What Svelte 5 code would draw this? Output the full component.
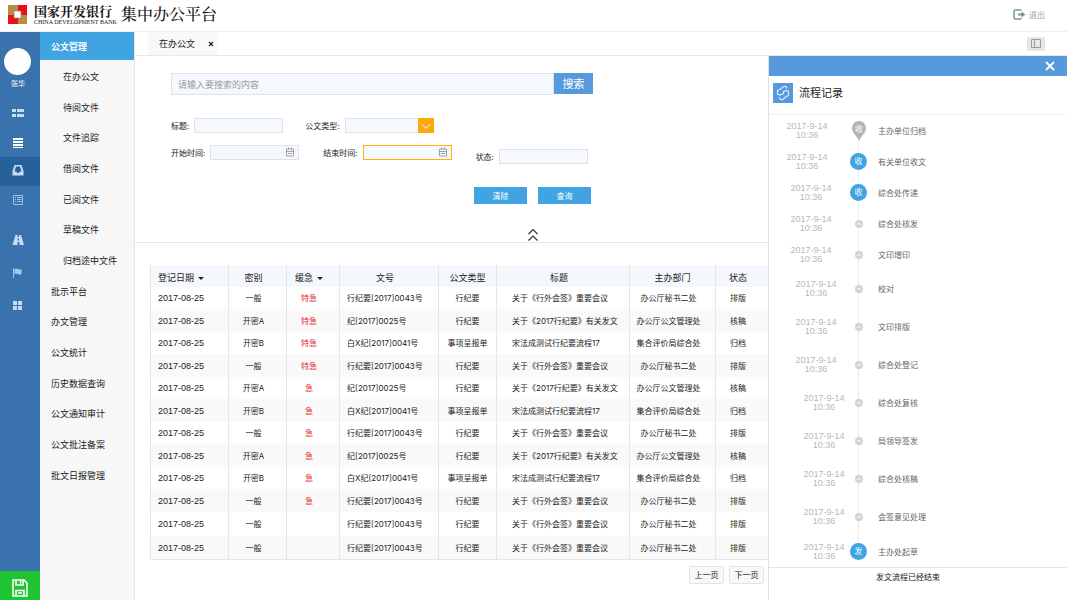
<script>
  let activeRail = 'inbox';
  let activeMenu = '在办公文';
  let flowOpen = true;
  let filterOpen = true;

  let keyword = '';
  let filter = { title: '', type: '', start: '', end: '', status: '' };

  const menu = [
    { name: '在办公文', sub: true },
    { name: '待阅文件', sub: true },
    { name: '文件追踪', sub: true },
    { name: '借阅文件', sub: true },
    { name: '已阅文件', sub: true },
    { name: '草稿文件', sub: true },
    { name: '归档途中文件', sub: true },
    { name: '批示平台' },
    { name: '办文管理' },
    { name: '公文统计' },
    { name: '历史数据查询' },
    { name: '公文通知审计' },
    { name: '公文批注备案' },
    { name: '批文日报管理' }
  ];

  const kinds = {
    a: { level: '一般', no: '行纪要[2017]0043号', type: '行纪要', title: '关于《行外会签》重要会议', dept: '办公厅秘书二处', status: '排版' },
    b: { level: '开密A', no: '纪[2017]0025号', type: '行纪要', title: '关于《2017行纪要》有关发文', dept: '办公厅公文管理处', status: '核稿' },
    c: { level: '开密B', no: '白X纪[2017]0041号', type: '事项呈报单', title: '宋法成测试行纪要流程17', dept: '集合评价局综合处', status: '归档' }
  };

  const urgency = ['特急', '特急', '特急', '特急', '急', '急', '急', '急', '急', '急', '', ''];

  const rows = [...'abcabcabcaaa'].map((k, i) => ({
    ...kinds[k],
    date: '2017-08-25',
    urgent: urgency[i]
  }));

  const steps = [
    { name: '主办单位归档', pin: '收' },
    { name: '有关单位收文', mark: '收' },
    { name: '综合处传递', mark: '收' },
    { name: '综合处核发' },
    { name: '文印增印' },
    { name: '校对', loose: true },
    { name: '文印排版', loose: true },
    { name: '综合处登记', loose: true },
    { name: '综合处复核', loose: true },
    { name: '局领导签发', loose: true },
    { name: '综合处核稿', loose: true },
    { name: '会签意见处理', loose: true },
    { name: '主办处起草', mark: '发' }
  ];

  function clearFilter() {
    filter = { title: '', type: '', start: '', end: '', status: '' };
  }
</script>

{#snippet calendar()}
  <svg class="calendar" viewBox="0 0 10 10" aria-hidden="true">
    <path d="M1.500 2h7v7h-7zM1.500 4.500h7M3.500 .5v2M6.500 .5v2M3 6.500h4" fill="none" stroke="#8a8a8a" stroke-width=".8" />
  </svg>
{/snippet}

<div class="page">
  <header class="top">
    <svg class="logo" viewBox="0 0 20 20" aria-hidden="true">
      <path d="M0 0h19v19H0z" fill="#b98c46" />
      <path d="M10 0h9v10h-9zM0 10h10v9H0z" fill="#ea1018" />
      <path d="M6 6h7v7H6z" fill="#fff" stroke="#8d7a72" stroke-width=".6" />
    </svg>
    <div class="bank">
      <span class="bank-cn">国家开发银行</span>
      <span class="bank-en">CHINA DEVELOPMENT BANK</span>
    </div>
    <h1>集中办公平台</h1>
    <button class="logout">
      <svg viewBox="0 0 13 11" aria-hidden="true">
        <path d="M8 2V1.8Q8 1 7 1H2.500Q1 1 1 2.500v6Q1 10 2.500 10H7Q8 10 8 9.200V9" fill="none" stroke="#7f9491" stroke-width="1.500" />
        <path d="M5 4.500h3.500V2.500L12.500 5.500 8.500 8.500V6.500H5z" fill="#7f9491" />
      </svg>
      退出
    </button>
  </header>

  <div class="body">
    <nav class="rail" aria-label="快捷导航">
      <div class="avatar"></div>
      <span class="user">张华</span>
      <div class="rail-group">
        <button aria-label="列表" on:click={() => (activeRail = 'list')} class:active={activeRail === 'list'}>
          <svg viewBox="0 0 12 12"><path d="M0 2h4v3H0zM5 2h7v3H5zM0 7h4v3H0zM5 7h7v3H5z" fill="#c5dcf3" /></svg>
        </button>
        <button aria-label="菜单" on:click={() => (activeRail = 'bars')} class:active={activeRail === 'bars'}>
          <svg viewBox="0 0 12 12"><path d="M1 2h10v2H1zM1 5h10v2H1zM1 8h10v2H1zM1 11h10v1H1z" fill="#fff" /></svg>
        </button>
        <button aria-label="收件箱" on:click={() => (activeRail = 'inbox')} class:active={activeRail === 'inbox'}>
          <svg viewBox="0 0 12 12">
            <path fill-rule="evenodd" d="M2.500 0h7L11.500 6v4.500H.5V6zM4 1.500 2.500 6.500h2L5 8h2l.5-1.500h2L8 1.500z" fill="#c5dcf3" />
          </svg>
        </button>
        <button aria-label="文档" on:click={() => (activeRail = 'doc')} class:active={activeRail === 'doc'}>
          <svg viewBox="0 0 12 12"><path d="M1.500 1.500h9v9h-9zM3 3.500h1M5 3.500h4.500M3 5.500h1M5 5.500h4.500M3 7.500h1M5 7.500h4.500" fill="none" stroke="#9fc3e6" /></svg>
        </button>
      </div>
      <div class="rail-group wide">
        <button aria-label="道路" on:click={() => (activeRail = 'road')} class:active={activeRail === 'road'}>
          <svg viewBox="0 0 12 12"><path d="M3.500 1h2v2h1.500V1h2L12 11H7.500V8h-2v3H.5zM5.500 4.500v2h1.500v-2z" fill-rule="evenodd" fill="#c5dcf3" /></svg>
        </button>
        <button aria-label="标记" on:click={() => (activeRail = 'flag')} class:active={activeRail === 'flag'}>
          <svg viewBox="0 0 12 12"><path d="M1 1h1v10H1zM2.500 2q2-1 3.500 0t3.500 0v5q-2 1-3.500 0t-3.500 0z" fill="#a9c9ea" /></svg>
        </button>
        <button aria-label="应用" on:click={() => (activeRail = 'apps')} class:active={activeRail === 'apps'}>
          <svg viewBox="0 0 12 12"><path d="M1 1h4v4H1zM6 1h4v4H6zM1 6h4v4H1zM6 6h4v4H6z" fill="#c5dcf3" /></svg>
        </button>
      </div>
      <button class="save" aria-label="保存">
        <svg viewBox="0 0 16 18">
          <path d="M1 1h11l3 3v13H1zM4 1v5h7V1M4 17v-5.500h8V17M8.500 2v2.500M6 14h4" fill="none" stroke="#fff" stroke-width="1.600" />
        </svg>
      </button>
    </nav>

    <nav class="menu" aria-label="公文管理">
      <h2>公文管理</h2>
      <ul>
        {#each menu as item}
          <li class:sub={item.sub}>
            <a href="#{item.name}" aria-current={activeMenu === item.name} on:click={() => (activeMenu = item.name)}>{item.name}</a>
          </li>
        {/each}
      </ul>
    </nav>

    <div class="content">
      <div class="tabs">
        <div class="tab">
          <span>在办公文</span>
          <button aria-label="关闭标签">
            <svg viewBox="0 0 6 6"><path d="M1 1l4 4M5 1L1 5" stroke="#222" stroke-width="1.200" /></svg>
          </button>
        </div>
        <button class="toggle" aria-label="切换侧栏" on:click={() => (flowOpen = !flowOpen)}>
          <svg viewBox="0 0 10 10"><path d="M.5 .5h9v8h-9zM3.500 .5v8" fill="none" stroke="#9a9a9a" /></svg>
        </button>
      </div>

      <div class="columns">
        <main>
          <section class="filter">
            <form class="search" on:submit|preventDefault>
              <input aria-label="搜索" placeholder="请输入要搜索的内容" bind:value={keyword} />
              <button>搜索</button>
            </form>

            {#if filterOpen}
              <form class="fields" on:submit|preventDefault>
                <div class="line">
                  <label>标题:<input bind:value={filter.title} /></label>
                  <label>
                    公文类型:
                    <span class="select">
                      <select bind:value={filter.type}>
                        <option value=""></option>
                        <option>行纪要</option>
                        <option>事项呈报单</option>
                      </select>
                      <svg viewBox="0 0 16 15" aria-hidden="true">
                        <path d="M0 0h16v15H0z" fill="#fbac0c" />
                        <path d="M3.500 6 8 10.500 12.500 6" fill="none" stroke="#fff" />
                      </svg>
                    </span>
                  </label>
                </div>
                <div class="line dates">
                  <label>
                    开始时间:
                    <span class="date">
                      <input bind:value={filter.start} />
                      {@render calendar()}
                    </span>
                  </label>
                  <label>
                    结束时间:
                    <span class="date">
                      <input class="picked" bind:value={filter.end} />
                      {@render calendar()}
                    </span>
                  </label>
                  <label class="status">状态:<input bind:value={filter.status} /></label>
                </div>
                <div class="actions">
                  <button type="button" on:click={clearFilter}>清除</button>
                  <button type="submit">查询</button>
                </div>
              </form>
            {/if}

            <button class="fold" aria-label="收起" on:click={() => (filterOpen = !filterOpen)}>
              <svg viewBox="0 0 12 14"><path d="M1.500 6 6 1.500 10.500 6M1.500 12.500 6 8 10.500 12.500" fill="none" stroke="#333" stroke-width="1.200" /></svg>
            </button>
          </section>

          <section class="list">
            <table>
              <colgroup>
                <col class="c-date" />
                <col class="c-level" />
                <col class="c-urgent" />
                <col class="c-no" />
                <col class="c-type" />
                <col />
                <col class="c-dept" />
                <col class="c-status" />
              </colgroup>
              <thead>
                <tr>
                  <th class="left"><button class="sort">登记日期</button></th>
                  <th class="near">密别</th>
                  <th class="near"><button class="sort">缓急</button></th>
                  <th class="near">文号</th>
                  <th>公文类型</th>
                  <th class="near">标题</th>
                  <th>主办部门</th>
                  <th class="near">状态</th>
                </tr>
              </thead>
              <tbody>
                {#each rows as row}
                  <tr>
                    <td class="left day">{row.date}</td>
                    <td class="near">{row.level}</td>
                    <td class="near urgent">{row.urgent}</td>
                    <td class="left">{row.no}</td>
                    <td>{row.type}</td>
                    <td class="title">{row.title}</td>
                    <td class="near">{row.dept}</td>
                    <td class="near">{row.status}</td>
                  </tr>
                {/each}
              </tbody>
            </table>
            <div class="pager">
              <button>上一页</button>
              <button>下一页</button>
            </div>
          </section>
        </main>

        {#if flowOpen}
          <aside class="flow">
            <div class="flow-bar">
              <button aria-label="关闭" on:click={() => (flowOpen = false)}>
                <svg viewBox="0 0 10 10"><path d="M1 1l8 8M9 1L1 9" stroke="#fff" stroke-width="1.800" /></svg>
              </button>
            </div>
            <div class="flow-head">
              <svg viewBox="0 0 20 20" aria-hidden="true">
                <path d="M0 0h20v20H0z" fill="#5799dd" />
                <path d="M14 5.500 13 3.500h-2.500L7.500 6 4.500 7.500V11L7 12l3.500-1.500V8M6 14.500 7.500 16.500H10l2.500-2.500 3-1.500V8.500L13 7.500 10.500 9" fill="none" stroke="#dcebfb" stroke-width="1.200" />
              </svg>
              <h2>流程记录</h2>
            </div>
            <ol>
              {#each steps as step}
                <li class:loose={step.loose}>
                  <time datetime="2017-09-14T10:36">2017-9-14<br />10:36</time>
                  <span class="node">
                    {#if step.pin}
                      <svg class="pin" viewBox="0 0 14 20" aria-hidden="true">
                        <path d="M7 0a7 7 0 0 1 7 7c0 5-5 8-7 13C5 15 0 12 0 7a7 7 0 0 1 7-7z" fill="#b4b4b4" />
                        <text x="7" y="11" text-anchor="middle">{step.pin}</text>
                      </svg>
                    {:else if step.mark}
                      <span class="mark">{step.mark}</span>
                    {:else}
                      <svg class="dot" viewBox="0 0 8 8" aria-hidden="true">
                        <circle cx="4" cy="4" r="4" fill="#d2d2d2" />
                        <path d="M2 5l2-2 2 2" fill="none" stroke="#fff" />
                      </svg>
                    {/if}
                  </span>
                  <span class="name">{step.name}</span>
                </li>
              {/each}
            </ol>
            <p class="done">发文流程已经结束</p>
          </aside>
        {/if}
      </div>
    </div>
  </div>
</div>

<style>
  :global(body) {
    background: #fff;
  }

  .page {
    min-height: 100vh;
    display: flex;
    flex-direction: column;
    font-family: Inter, 'Noto Sans CJK SC', sans-serif;
    font-size: 8px;
    line-height: 12px;
    color: #222;
  }

  .page * {
    box-sizing: border-box;
  }

  svg {
    display: block;
    flex: none;
  }

  button {
    font: inherit;
    color: inherit;
    padding: 0;
    border: none;
    background: none;
    cursor: pointer;
  }

  h1, h2, p, ul, ol {
    margin: 0;
    padding: 0;
    list-style: none;
  }

  /* header */
  .top {
    display: flex;
    align-items: center;
    height: 32px;
    padding: 0 22px 2px 8px;
    border-bottom: 1px solid #eee;
  }

  .logo {
    width: 20px;
    height: 20px;
  }

  .bank {
    display: flex;
    flex-direction: column;
    width: 87px;
    padding-left: 6px;
    color: #1c1414;
    font-weight: 700;
    white-space: nowrap;
  }

  .bank-cn {
    font-family: 'Liberation Serif', 'Noto Serif CJK SC', 'Noto Sans CJK SC', serif;
    font-size: 13px;
    line-height: 14px;
  }

  .bank-en {
    font-family: 'Liberation Serif', serif;
    font-size: 6px;
    font-weight: 400;
    line-height: 6px;
  }

  h1 {
    padding-left: 6px;
    font-family: 'Liberation Serif', 'Noto Serif CJK SC', 'Noto Sans CJK SC', serif;
    font-size: 16px;
    font-weight: 500;
    line-height: 20px;
    color: #1c1414;
  }

  .logout {
    display: flex;
    align-items: center;
    gap: 3px;
    margin-left: auto;
    color: #94a3a1;
  }

  .logout svg {
    width: 13px;
    height: 11px;
  }

  .body {
    flex: 1;
    display: flex;
  }

  /* icon rail */
  .rail {
    flex: none;
    width: 40px;
    display: flex;
    flex-direction: column;
    background: #3a72ae;
  }

  .avatar {
    width: 27px;
    height: 27px;
    margin: 16px 0 0 4px;
    border-radius: 50%;
    background: #fff;
  }

  .user {
    width: 36px;
    margin: 3px 0 9px;
    text-align: center;
    font-size: 7px;
    color: #fff;
  }

  .rail-group {
    display: flex;
    flex-direction: column;
  }

  .rail-group.wide {
    margin-top: 9px;
  }

  .rail-group button {
    display: flex;
    height: 29px;
    padding: 8px 0 0 12px;
  }

  .rail-group.wide button {
    height: 33px;
    padding-top: 10px;
  }

  .rail-group button.active {
    background: #266199;
  }

  .rail-group svg {
    width: 12px;
    height: 12px;
  }

  .save {
    display: flex;
    justify-content: center;
    align-items: flex-end;
    height: 29px;
    margin-top: auto;
    padding-bottom: 3px;
    background: #1fc435;
  }

  .save svg {
    width: 16px;
    height: 18px;
  }

  /* menu */
  .menu {
    flex: none;
    width: 95px;
    background: #f7f7f7;
    border-right: 1px solid #e4e4e4;
    font-size: 9px;
  }

  .menu h2 {
    padding: 1px 0 0 11px;
    font-size: 9px;
    font-weight: 700;
    line-height: 27px;
    color: #fff;
    background: #40a4e2;
  }

  .menu ul {
    padding-top: 1px;
  }

  .menu li {
    line-height: 31px;
    padding-left: 11px;
  }

  .menu li:nth-child(3n) {
    line-height: 30px;
  }

  .menu li.sub {
    padding-left: 23px;
  }

  .menu a {
    display: block;
    color: #222;
    text-decoration: none;
  }

  .content {
    flex: 1;
    min-width: 0;
    display: flex;
    flex-direction: column;
  }

  .tabs {
    display: flex;
    align-items: center;
    justify-content: space-between;
    height: 24px;
    padding: 0 22px 0 13px;
    border-bottom: 1px solid #e8e8e8;
  }

  .tab {
    display: flex;
    align-items: center;
    justify-content: space-between;
    width: 69px;
    height: 23px;
    padding: 0 3px 0 11px;
    background: #f8f8f8;
    font-size: 9px;
  }

  .tab svg {
    width: 6px;
    height: 6px;
  }

  .toggle {
    display: grid;
    place-items: center;
    width: 18px;
    height: 14px;
    background: #e6e6e6;
  }

  .toggle svg {
    width: 10px;
    height: 10px;
  }

  .columns {
    flex: 1;
    display: flex;
  }

  main {
    flex: 1;
    min-width: 0;
  }

  /* filter */
  .filter {
    display: flex;
    flex-direction: column;
    padding: 17px 36px 0;
    border-bottom: 1px solid #e8e8e8;
  }

  input, select {
    font: inherit;
    color: inherit;
    width: 89px;
    height: 15px;
    padding: 0 4px;
    border: 1px solid #dfe3e8;
    border-radius: 0;
    background: #f5f9fe;
    outline: none;
  }

  .search {
    display: flex;
    max-width: 422px;
  }

  .search input {
    flex: 1;
    height: 22px;
    padding: 0 6px;
    font-size: 9px;
  }

  .search input::placeholder {
    color: #999;
  }

  .search button {
    width: 39px;
    height: 21px;
    font-size: 11px;
    color: #fff;
    background: #5799dd;
  }

  .line {
    display: flex;
    gap: 22px;
    margin-top: 23px;
  }

  .line.dates {
    gap: 24px;
    height: 19px;
    margin-top: 12px;
  }

  label {
    display: flex;
    align-items: center;
    gap: 5px;
    height: 15px;
    white-space: nowrap;
  }

  label.status {
    align-self: flex-end;
  }

  .select, .date {
    position: relative;
  }

  .select select {
    display: block;
    appearance: none;
  }

  .select svg {
    position: absolute;
    top: 0;
    right: 0;
    width: 16px;
    height: 15px;
    pointer-events: none;
  }

  .date input {
    display: block;
    padding-right: 16px;
  }

  .date input.picked {
    border-color: #ffb400;
  }

  .calendar {
    position: absolute;
    top: 2px;
    right: 4px;
    width: 10px;
    height: 10px;
    pointer-events: none;
  }

  .actions {
    display: flex;
    justify-content: flex-end;
    gap: 11px;
    max-width: 420px;
    margin-top: 23px;
  }

  .actions button {
    width: 53px;
    height: 17px;
    color: #fff;
    background: #40a4e2;
  }

  .fold {
    align-self: center;
    margin: 24px 0 0 162px;
  }

  .fold svg {
    width: 12px;
    height: 14px;
  }

  /* list */
  .list {
    padding: 22px 0 16px 15px;
  }

  table {
    width: 100%;
    table-layout: fixed;
    border-collapse: separate;
    border-spacing: 0;
    border: 1px solid #e6e6e6;
    border-width: 0 0 1px 1px;
  }

  .c-date { width: 78px; }
  .c-level { width: 58px; }
  .c-urgent { width: 53px; }
  .c-no { width: 99px; }
  .c-type { width: 58px; }
  .c-dept { width: 86px; }
  .c-status { width: 52px; }

  th, td {
    padding: 0;
    text-align: center;
    white-space: nowrap;
    border-right: 1px solid #e6e6e6;
  }

  th:last-child, td:last-child {
    border-right: none;
  }

  th {
    height: 22px;
    padding-top: 4px;
    font-size: 9px;
    font-weight: 400;
    background: #f4f8fd;
  }

  td {
    height: 22px;
  }

  tbody tr:nth-child(even) td {
    height: 23px;
    background: #f9f9f9;
  }

  tbody tr:nth-child(11) td {
    height: 24px;
  }

  .near {
    padding-right: 8px;
  }

  .left {
    text-align: left;
    padding-left: 7px;
  }

  .day, .flow time {
    font-family: 'Liberation Sans', Arial, sans-serif;
    font-size: 9px;
  }

  td.title {
    text-align: left;
    padding-left: 15px;
  }

  .urgent {
    color: #e8262d;
  }

  .sort {
    display: inline-flex;
    align-items: center;
    gap: 4px;
  }

  .sort::after {
    content: '';
    border: 3px solid transparent;
    border-top-color: #222;
    border-bottom: none;
  }

  .pager {
    display: flex;
    justify-content: flex-end;
    gap: 5px;
    padding: 6px 4px 0 0;
  }

  .pager button {
    width: 35px;
    height: 18px;
    border: 1px solid #e4e4e4;
    border-radius: 2px;
    background: #f8f8f8;
  }

  /* flow panel */
  .flow {
    flex: none;
    width: 299px;
    border-left: 1px solid #e0e0e0;
  }

  .flow-bar {
    display: flex;
    justify-content: flex-end;
    align-items: center;
    height: 20px;
    padding-right: 12px;
    background: #5799dd;
  }

  .flow-bar svg {
    width: 10px;
    height: 10px;
  }

  .flow-head {
    display: flex;
    align-items: center;
    gap: 6px;
    height: 39px;
    padding: 0 4px 5px;
    border-bottom: 1px solid #f0f0f0;
  }

  .flow-head svg {
    width: 20px;
    height: 20px;
  }

  .flow-head h2 {
    font-size: 11px;
    font-weight: 400;
    line-height: 16px;
    color: #222;
  }

  .flow li {
    display: flex;
    align-items: center;
    height: 31px;
  }

  .flow li.loose {
    height: 38px;
  }

  .flow time {
    width: 80px;
    padding-right: 4px;
    text-align: center;
    line-height: 9px;
    color: #b8b8b8;
  }

  .flow li:nth-child(n + 3) time {
    padding: 0 0 0 4px;
  }

  .flow li:nth-child(n + 6) time {
    padding-left: 14px;
  }

  .flow li:nth-child(n + 9) time {
    padding-left: 30px;
  }

  .node {
    align-self: stretch;
    display: grid;
    place-items: center;
    width: 19px;
    background: linear-gradient(#ececec, #ececec) center / 1px 100% no-repeat;
  }

  .flow li:first-child .node {
    background-position: center bottom;
    background-size: 1px 50%;
  }

  .flow li:last-child .node {
    background-position: center top;
    background-size: 1px 50%;
  }

  .pin {
    width: 14px;
    height: 20px;
  }

  .pin text {
    font-size: 8px;
    fill: #fff;
  }

  .mark {
    width: 17px;
    height: 17px;
    border-radius: 50%;
    line-height: 17px;
    text-align: center;
    color: #fff;
    background: #40a4e2;
  }

  .dot {
    width: 8px;
    height: 8px;
  }

  .flow .name {
    padding-left: 10px;
    color: #666;
  }

  .done {
    padding: 3px 0 0 107px;
    border-top: 1px solid #e4e4e4;
  }
</style>
